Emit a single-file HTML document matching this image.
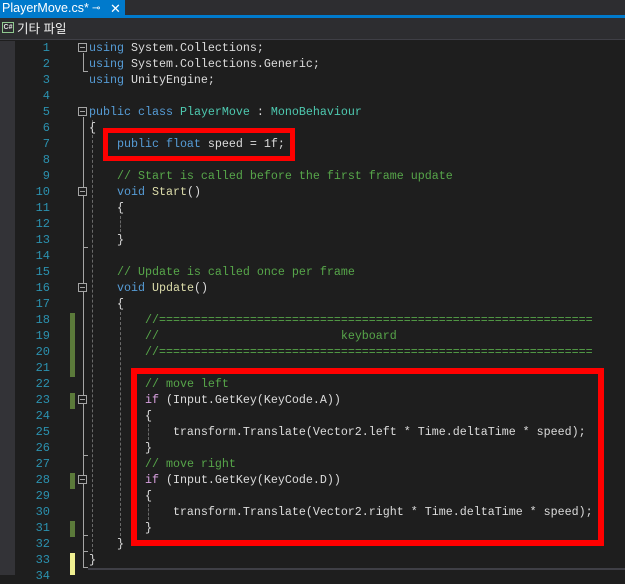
<!DOCTYPE html>
<html><head><meta charset="utf-8"><style>
*{margin:0;padding:0;box-sizing:border-box}
body{width:625px;height:575px;overflow:hidden;background:#1e1e1e;position:relative;font-family:"Liberation Mono",monospace;}
.abs{position:absolute}
.ln{position:absolute;left:16px;width:34px;text-align:right;color:#2b91af;font-size:12px;line-height:16px;font-family:"Liberation Mono",monospace}
.cl{position:absolute;left:89px;font-size:11.67px;line-height:16px;color:#dcdcdc;white-space:pre}
.k{color:#569cd6}.t{color:#4ec9b0}.c{color:#57a64a}.m{color:#dcdcaa}.p{color:#d8a0df}
.fb{position:absolute;left:78px;width:9px;height:9px;border:1px solid #a5a5a5;background:#1e1e1e}
.fb:after{content:"";position:absolute;left:1px;top:3px;width:5px;height:1px;background:#a5a5a5}
.gb{position:absolute;left:70px;width:5px;background:#5b7a3a}
.vd{position:absolute;width:0;border-left:1px dashed #6a6a6a}
.red{position:absolute;border:solid #ff0000}
</style></head><body>
<!-- tab bar -->
<div class="abs" style="left:0;top:0;width:625px;height:15px;background:#2d2d30"></div>
<div class="abs" style="left:0;top:0;width:125px;height:17px;background:#007acc;color:#fff;font-family:'Liberation Sans',sans-serif;font-size:12.5px;line-height:17px;padding-left:2px">PlayerMove.cs*<span style="position:absolute;left:92px;font-size:10px">⊸</span><span style="position:absolute;left:110px;font-size:13px">✕</span></div>
<div class="abs" style="left:0;top:15px;width:625px;height:3px;background:#007acc"></div>
<!-- nav bar -->
<div class="abs" style="left:0;top:18px;width:625px;height:22px;background:#2d2d30;border-bottom:1px solid #3f3f46"></div>
<div class="abs" style="left:2px;top:22px;width:12px;height:11px;border:1px solid #8fc88f;color:#ddd;font-size:7px;line-height:9px;text-align:center;font-family:'Liberation Sans',sans-serif;font-weight:bold">C#</div>
<div class="abs" style="left:17px;top:20px;color:#f1f1f1;font-size:12.5px;line-height:18px;font-family:'Liberation Sans','Noto Sans CJK KR',sans-serif">기타 파일</div>
<!-- left strip -->
<div class="abs" style="left:0;top:41px;width:15px;height:534px;background:#333337"></div>
<!-- bottom line -->
<div class="abs" style="left:88px;top:568px;width:537px;height:2px;background:#3f3f46"></div>

<!-- line numbers -->
<div class="ln" style="top:40px">1<br>2<br>3<br>4<br>5<br>6<br>7<br>8<br>9<br>10<br>11<br>12<br>13<br>14<br>15<br>16<br>17<br>18<br>19<br>20<br>21<br>22<br>23<br>24<br>25<br>26<br>27<br>28<br>29<br>30<br>31<br>32<br>33<br>34</div>

<!-- change bars -->
<div class="gb" style="top:313px;height:64px"></div>
<div class="gb" style="top:393px;height:16px"></div>
<div class="gb" style="top:473px;height:16px"></div>
<div class="gb" style="top:521px;height:16px"></div>
<div class="abs" style="left:70px;top:553px;width:5px;height:22px;background:#efef91"></div>

<!-- fold lines -->
<div class="abs" style="left:83px;top:53px;width:1px;height:18px;background:#a5a5a5"></div>
<div class="abs" style="left:83px;top:71px;width:5px;height:1px;background:#a5a5a5"></div>
<div class="abs" style="left:83px;top:117px;width:1px;height:450px;background:#a5a5a5"></div>
<div class="abs" style="left:83px;top:247px;width:5px;height:1px;background:#a5a5a5"></div>
<div class="abs" style="left:83px;top:455px;width:5px;height:1px;background:#a5a5a5"></div>
<div class="abs" style="left:83px;top:535px;width:5px;height:1px;background:#a5a5a5"></div>
<div class="abs" style="left:83px;top:551px;width:5px;height:1px;background:#a5a5a5"></div>
<div class="abs" style="left:83px;top:567px;width:5px;height:1px;background:#a5a5a5"></div>
<div class="fb" style="top:43px"></div>
<div class="fb" style="top:107px"></div>
<div class="fb" style="top:187px"></div>
<div class="fb" style="top:283px"></div>
<div class="fb" style="top:395px"></div>
<div class="fb" style="top:475px"></div>

<!-- indent guides -->
<div class="vd" style="left:92px;top:120px;height:432px"></div>
<div class="vd" style="left:120px;top:216px;height:16px"></div>
<div class="vd" style="left:120px;top:312px;height:224px"></div>
<div class="vd" style="left:148px;top:424px;height:16px"></div>
<div class="vd" style="left:148px;top:504px;height:16px"></div>

<!-- code -->
<div class="cl" style="top:40px"><span class="k">using</span> System.Collections;</div>
<div class="cl" style="top:56px"><span class="k">using</span> System.Collections.Generic;</div>
<div class="cl" style="top:72px"><span class="k">using</span> UnityEngine;</div>
<div class="cl" style="top:104px"><span class="k">public class</span> <span class="t">PlayerMove</span> : <span class="t">MonoBehaviour</span></div>
<div class="cl" style="top:120px">{</div>
<div class="cl" style="top:136px">    <span class="k">public float</span> speed = 1f;</div>
<div class="cl" style="top:168px">    <span class="c">// Start is called before the first frame update</span></div>
<div class="cl" style="top:184px">    <span class="k">void</span> <span class="m">Start</span>()</div>
<div class="cl" style="top:200px">    {</div>
<div class="cl" style="top:232px">    }</div>
<div class="cl" style="top:264px">    <span class="c">// Update is called once per frame</span></div>
<div class="cl" style="top:280px">    <span class="k">void</span> <span class="m">Update</span>()</div>
<div class="cl" style="top:296px">    {</div>
<div class="cl" style="top:312px">        <span class="c">//==============================================================</span></div>
<div class="cl" style="top:328px">        <span class="c">//                          keyboard</span></div>
<div class="cl" style="top:344px">        <span class="c">//==============================================================</span></div>
<div class="cl" style="top:376px">        <span class="c">// move left</span></div>
<div class="cl" style="top:392px">        <span class="p">if</span> (Input.GetKey(KeyCode.A))</div>
<div class="cl" style="top:408px">        {</div>
<div class="cl" style="top:424px">            transform.Translate(Vector2.left * Time.deltaTime * speed);</div>
<div class="cl" style="top:440px">        }</div>
<div class="cl" style="top:456px">        <span class="c">// move right</span></div>
<div class="cl" style="top:472px">        <span class="p">if</span> (Input.GetKey(KeyCode.D))</div>
<div class="cl" style="top:488px">        {</div>
<div class="cl" style="top:504px">            transform.Translate(Vector2.right * Time.deltaTime * speed);</div>
<div class="cl" style="top:520px">        }</div>
<div class="cl" style="top:536px">    }</div>
<div class="cl" style="top:552px">}</div>

<!-- red boxes -->
<div class="red" style="left:103px;top:128px;width:192px;height:33px;border-width:5px"></div>
<div class="red" style="left:131px;top:368px;width:473px;height:178px;border-width:6px"></div>
</body></html>
